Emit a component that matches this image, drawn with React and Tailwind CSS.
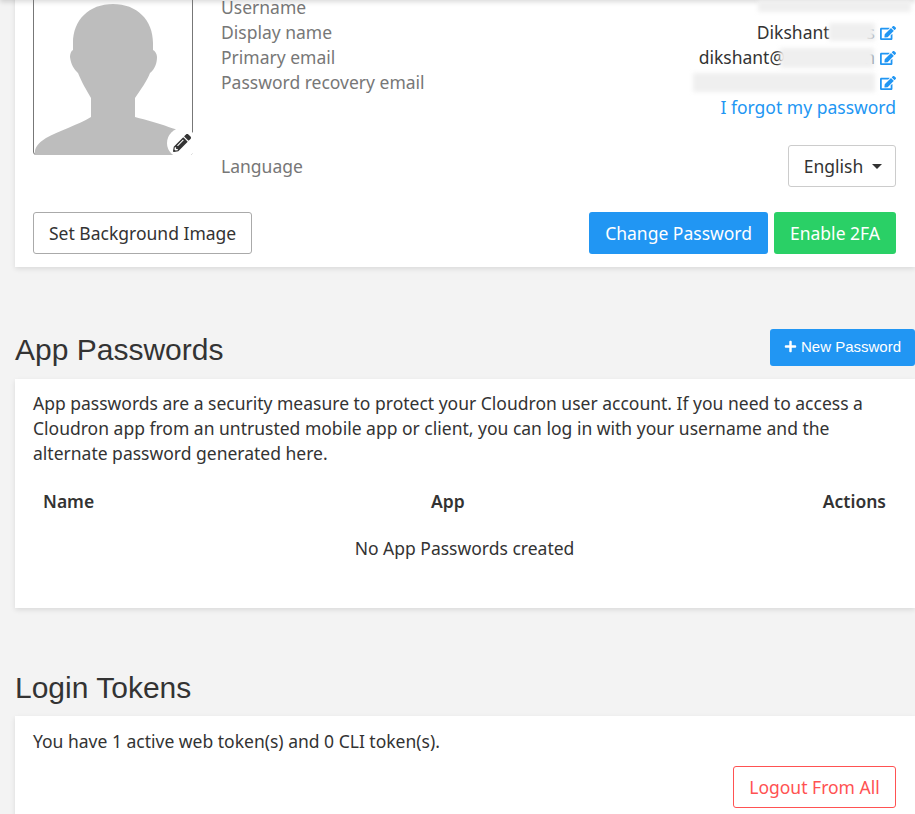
import React from "react";
import { FaEdit, FaPencilAlt, FaPlus } from "react-icons/fa";

const Blur = ({ className }) => (
  <span className={"absolute bg-[#efefef] blur-[2px] " + className} />
);

const Row = ({ label, children }) => (
  <div className="flex justify-between h-[25px] leading-[25px]">
    <span className="text-[#777777]">{label}</span>
    <span className="relative flex items-center">{children}</span>
  </div>
);

const Edit = () => <FaEdit className="ml-[5px] w-[16px] h-[16px] text-[#2196f3]" />;

export default function App() {
  return (
    <div className="relative h-[814px] w-[915px] overflow-hidden bg-[#f3f3f3] text-[17.5px] leading-[25px] text-[#333333] font-['Noto_Sans',sans-serif]">
      <div className="absolute left-0 right-0 top-[-10px] h-[10px] shadow-[0_2px_5px_rgba(0,0,0,0.15)]" />

      <div className="ml-[15px] mt-[-23px] h-[290px] bg-white pt-[18px] pl-[18px] pr-[19px] shadow-[0_2px_5px_rgba(0,0,0,0.1)]">
        <div className="flex">
          <div className="relative h-[160px] w-[160px] shrink-0 rounded-b-[3px] border border-[#777777]">
            <svg viewBox="0 0 160 160" className="absolute left-[-1px] top-[-1px] h-[160px] w-[160px]">
              <path
                fill="#bdbdbd"
                d="M80 9C56 9 40 25 40 48C40 51 40 53 40 55C38 56 37 59 37 62C38 70 41 74 45 78C49 88 53 94 58 103V122C45 130 25 136 13 143C5 148 1 153 2 160H158V141C150 136 125 128 102 122V103C108 94 114 86 117 78C122 74 124 68 124 62C124 59 122 56 120 55C120 53 120 51 120 48C120 25 104 9 80 9Z"
              />
            </svg>
            <div className="absolute bottom-[-4px] right-[-5px] flex h-[30px] w-[30px] items-center justify-center rounded-full bg-white">
              <FaPencilAlt className="h-[18px] w-[18px] text-[#333333]" />
            </div>
          </div>
          <div className="ml-[28px] flex-1">
            <Row label="Username">
              <span className="h-[12px] w-[153px] translate-x-[15px] translate-y-[-2px] bg-[#efefef] blur-[2px]" />
            </Row>
            <Row label="Display name">
              <span>Dikshant</span>
              <span className="w-[37px]" />
              <span>s</span>
              <Blur className="right-[21px] top-[3px] h-[18px] w-[46px]" />
              <Edit />
            </Row>
            <Row label="Primary email">
              <span>dikshant@</span>
              <span className="w-[79px]" />
              <span>n</span>
              <Blur className="right-[22px] top-[3px] h-[20px] w-[94px]" />
              <Edit />
            </Row>
            <Row label="Password recovery email">
              <span className="h-[19px] w-[182px] bg-[#efefef] blur-[2px]" />
              <Edit />
            </Row>
            <div className="h-[25px] text-right text-[#2196f3]">I forgot my password</div>
            <div className="mt-[25px] flex items-center justify-between">
              <span className="text-[#777777]">Language</span>
              <div className="flex h-[42px] w-[108px] items-center justify-center rounded-[3px] border border-[#cccccc] pl-[2px]">
                <span>English</span>
                <span className="ml-[9px] h-0 w-0 border-x-[5px] border-t-[5px] border-x-transparent border-t-[#333333]" />
              </div>
            </div>
          </div>
        </div>
        <div className="mt-[25px] flex items-center">
          <div className="flex h-[42px] items-center rounded-[3px] border border-[#aaaaaa] px-[15px]">Set Background Image</div>
          <div className="ml-auto flex h-[42px] items-center rounded-[3px] bg-[#2196f3] px-[16px] text-white">Change Password</div>
          <div className="ml-[6px] flex h-[42px] items-center rounded-[3px] bg-[#2ad066] px-[16px] text-white">Enable 2FA</div>
        </div>
      </div>

      <div className="ml-[15px] mt-[62px] flex h-[50px] items-start justify-between">
        <h2 className="mt-[1px] font-['Liberation_Sans',sans-serif] text-[30px] leading-[40px] text-[#333333]">App Passwords</h2>
        <div className="flex h-[37px] items-center rounded-[3px] bg-[#2196f3] px-[14px] pb-[2px] font-['Liberation_Sans',sans-serif] text-[15px] text-white">
          <FaPlus className="mr-[4px] h-[13px] w-[13px]" />
          New Password
        </div>
      </div>

      <div className="ml-[15px] h-[229px] bg-white pl-[18px] pr-[19px] pt-[12px] shadow-[0_2px_5px_rgba(0,0,0,0.1)]">
        <p>
          App passwords are a security measure to protect your Cloudron user account. If you need to access a Cloudron app from an untrusted mobile app or client, you can log in with your username and the alternate password generated here.
        </p>
        <div className="mt-[23px] flex px-[10px] font-semibold">
          <span className="w-[388px]">Name</span>
          <span>App</span>
          <span className="ml-auto">Actions</span>
        </div>
        <div className="mt-[22px] text-center">No App Passwords created</div>
      </div>

      <div className="ml-[15px] mt-[60px] flex h-[40px] items-center">
        <h2 className="font-['Liberation_Sans',sans-serif] text-[30px] leading-[40px] text-[#333333]">Login Tokens</h2>
      </div>

      <div className="ml-[15px] mt-[8px] h-[110px] bg-white pl-[18px] pr-[19px] pt-[13px] shadow-[0_2px_5px_rgba(0,0,0,0.1)]">
        <p>You have 1 active web token(s) and 0 CLI token(s).</p>
        <div className="mt-[12px] flex justify-end">
          <div className="flex h-[42px] w-[163px] items-center justify-center rounded-[3px] border border-[#ff5252] text-[#ff5252]">Logout From All</div>
        </div>
      </div>
    </div>
  );
}
